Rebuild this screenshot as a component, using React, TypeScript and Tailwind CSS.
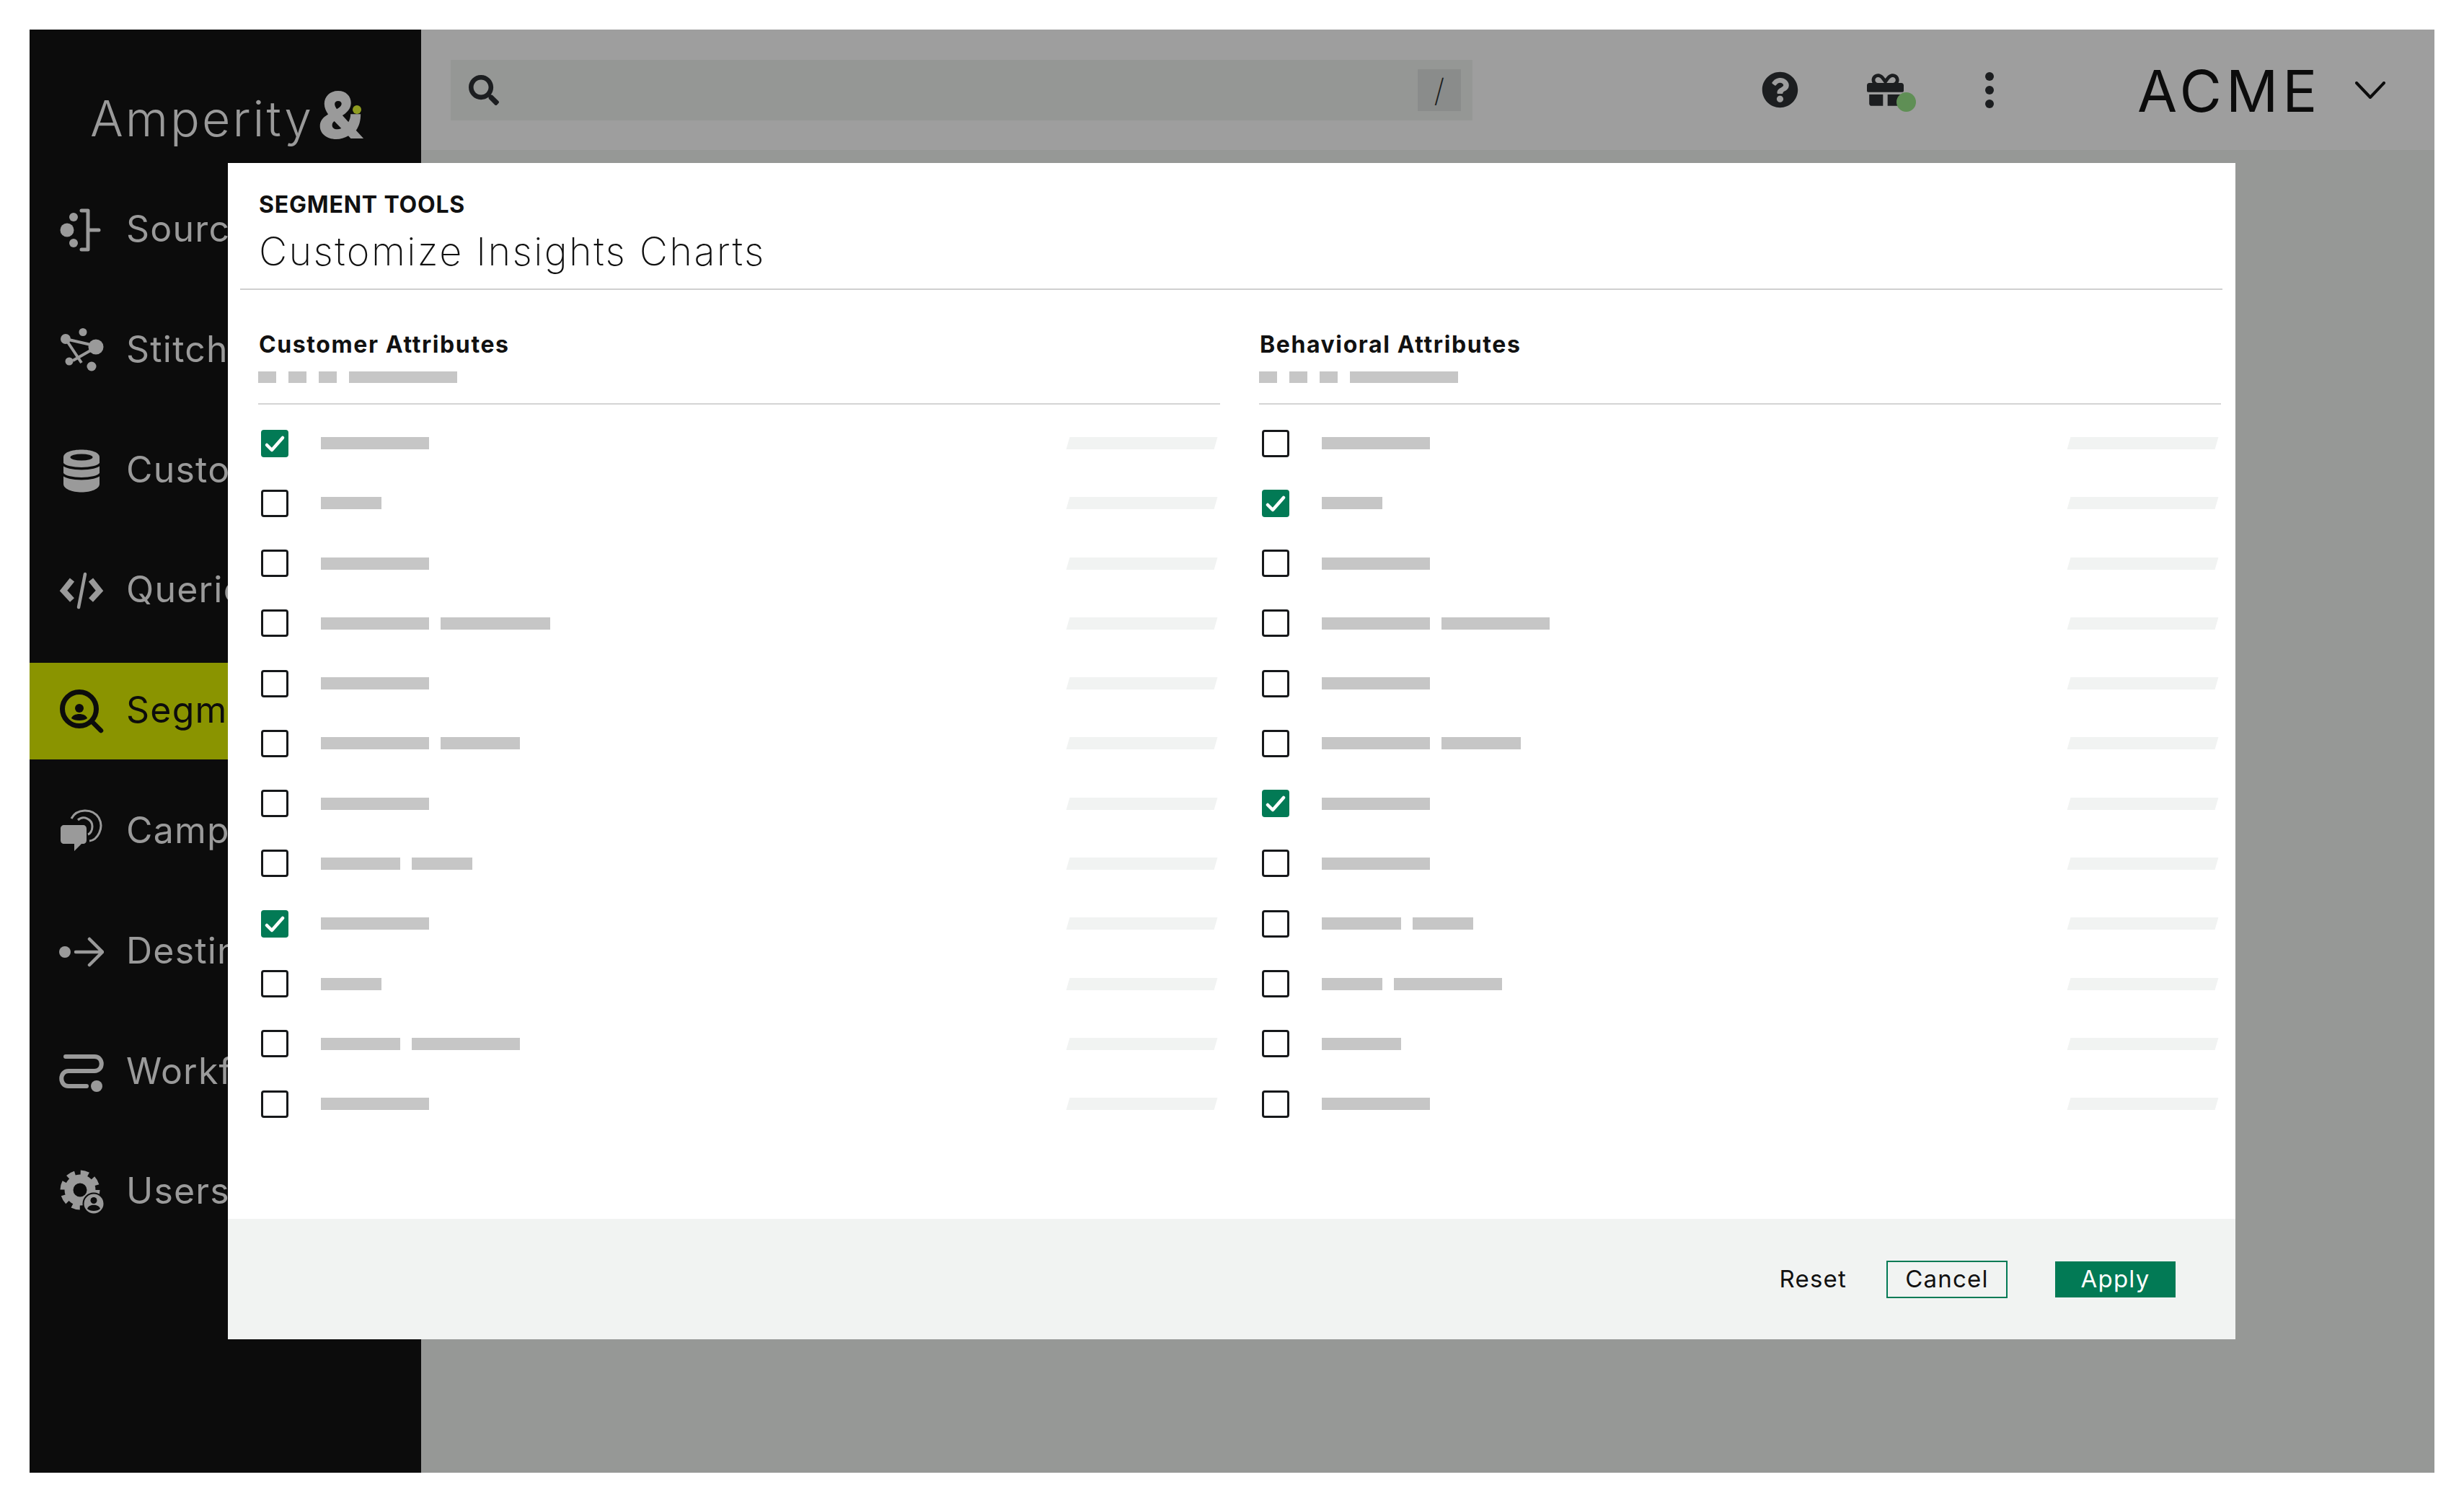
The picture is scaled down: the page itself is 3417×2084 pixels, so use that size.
import React from "react";
import { FaSearch, FaQuestionCircle, FaGift } from "react-icons/fa";

const G = "#9a9a9a";
const D = "#0c0c0c";

function SourcesIcon() {
  return (
    <svg viewBox="0 0 62 62" className="w-[62px] h-[62px]">
      <circle cx="11" cy="31" r="9.5" fill={G} />
      <circle cx="20" cy="13" r="6" fill={G} />
      <circle cx="20" cy="49" r="6" fill={G} />
      <path d="M31 4h9v54h-9M40 31h15" fill="none" stroke={G} strokeWidth="5" strokeLinecap="round" strokeLinejoin="round" />
    </svg>
  );
}
function StitchIcon() {
  return (
    <svg viewBox="0 0 62 62" className="w-[62px] h-[62px]">
      <g stroke={G} strokeWidth="4" fill="none">
        <path d="M9 15 44 23M9 15 31 48M19 45 47 29" />
      </g>
      <circle cx="51" cy="26" r="10.5" fill={G} />
      <circle cx="33" cy="5.5" r="5.5" fill={G} />
      <circle cx="9" cy="15" r="7" fill={G} />
      <circle cx="14" cy="46" r="5.5" fill={G} />
      <circle cx="45" cy="53" r="6.5" fill={G} />
    </svg>
  );
}
function CustomersIcon() {
  return (
    <svg viewBox="0 0 62 62" className="w-[62px] h-[62px]">
      <path d="M6 12C6 5 18 1.500 31 1.500S56 5 56 12V49C56 56 44 60.500 31 60.500S6 56 6 49Z" fill={G} />
      <ellipse cx="31" cy="12" rx="15.500" ry="4.500" fill={D} />
      <path d="M5 21C10 30 52 30 57 21M5 35C10 44 52 44 57 35" fill="none" stroke={D} strokeWidth="3.500" />
    </svg>
  );
}
function QueriesIcon() {
  return (
    <svg viewBox="0 0 62 62" className="w-[62px] h-[62px]">
      <path d="M18 16 6 31 18 44M44 16 56 31 44 44" fill="none" stroke={G} strokeWidth="8" />
      <path d="M36 8 27 54" fill="none" stroke={G} strokeWidth="4.500" strokeLinecap="round" />
    </svg>
  );
}
function SegmentsIcon() {
  return (
    <svg viewBox="0 0 62 62" className="w-[62px] h-[62px]">
      <circle cx="28" cy="28" r="23.500" fill="none" stroke={D} strokeWidth="7" />
      <path d="M46 46 58 58" stroke={D} strokeWidth="6.500" strokeLinecap="round" />
      <circle cx="28" cy="27" r="6" fill={D} />
      <path d="M17 41C19 33 37 33 39 41 35 45 21 45 17 41Z" fill={D} />
    </svg>
  );
}
function CampaignsIcon() {
  return (
    <svg viewBox="0 0 62 62" className="w-[62px] h-[62px]">
      <path d="M17 13C24 -1 46 -2 55 12 63 26 53 43 42 44" fill="none" stroke={G} strokeWidth="3" />
      <path d="M26 15C34 8 46 14 46 24 46 30 43 34 40 35" fill="none" stroke={G} strokeWidth="3" />
      <path d="M7 22H33C36 22 38 24 38 27V43C38 46 36 48 33 48H31L21 58V48H7C4 48 2 46 2 43V27C2 24 4 22 7 22Z" fill={G} />
    </svg>
  );
}
function DestinationsIcon() {
  return (
    <svg viewBox="0 0 62 62" className="w-[62px] h-[62px]">
      <circle cx="8" cy="31" r="8" fill={G} />
      <path d="M23 31H60M42 13 60 31 42 49" fill="none" stroke={G} strokeWidth="4.500" strokeLinecap="round" />
    </svg>
  );
}
function WorkflowsIcon() {
  return (
    <svg viewBox="0 0 62 62" className="w-[62px] h-[62px]">
      <path d="M9 9H49C62 9 62 29 49 29H13C0 29 0 50 13 50H38" fill="none" stroke={G} strokeWidth="6" strokeLinecap="round" />
      <circle cx="52" cy="50" r="8" fill={G} />
    </svg>
  );
}
function UsersIcon() {
  return (
    <svg viewBox="0 0 62 62" className="w-[62px] h-[62px]">
      <circle cx="29" cy="28" r="15.500" fill="none" stroke={G} strokeWidth="12" />
      <circle cx="29" cy="28" r="24" fill="none" stroke={G} strokeWidth="7" strokeDasharray="11 7.850" />
      <circle cx="48" cy="47" r="15.500" fill={D} />
      <circle cx="48" cy="47" r="13.500" fill={G} />
      <circle cx="48" cy="42.500" r="4.500" fill={D} />
      <path d="M39 54C41 47 55 47 57 54 53 58 43 58 39 54Z" fill={D} />
    </svg>
  );
}

const nav = [
  { label: "Sources", Icon: SourcesIcon },
  { label: "Stitch", Icon: StitchIcon },
  { label: "Customers", Icon: CustomersIcon },
  { label: "Queries", Icon: QueriesIcon },
  { label: "Segments", Icon: SegmentsIcon, active: true },
  { label: "Campaigns", Icon: CampaignsIcon },
  { label: "Destinations", Icon: DestinationsIcon },
  { label: "Workflows", Icon: WorkflowsIcon },
  { label: "Users", Icon: UsersIcon },
];

const left: [boolean, number[]][] = [
  [true, [150]], [false, [84]], [false, [150]], [false, [150, 152]],
  [false, [150]], [false, [150, 110]], [false, [150]], [false, [110, 84]],
  [true, [150]], [false, [84]], [false, [110, 150]], [false, [150]],
];
const right: [boolean, number[]][] = [
  [false, [150]], [true, [84]], [false, [150]], [false, [150, 150]],
  [false, [150]], [false, [150, 110]], [true, [150]], [false, [150]],
  [false, [110, 84]], [false, [84, 150]], [false, [110]], [false, [150]],
];

function Checkbox({ checked }: { checked: boolean }) {
  if (checked) {
    return (
      <div className="ml-[4px] w-[38px] h-[38px] rounded-[4px] bg-[#027a55] flex items-center justify-center shrink-0">
        <svg viewBox="0 0 38 38" className="w-[38px] h-[38px]">
          <path d="M8 21 15 28 30 11" fill="none" stroke="#ffffff" strokeWidth="4.500" strokeLinecap="round" strokeLinejoin="round" />
        </svg>
      </div>
    );
  }
  return <div className="ml-[4px] w-[38px] h-[38px] rounded-[4px] border-[3px] border-[#16181a] bg-white shrink-0" />;
}

function Column({ title, rows }: { title: string; rows: [boolean, number[]][] }) {
  return (
    <div className="w-[1334px] flex flex-col">
      <div className="h-[35px] pl-[1px] flex items-center text-[32px] leading-[35px] font-bold tracking-[1.6px] text-[#111111]">{title}</div>
      <div className="mt-[20px] flex gap-[17px]">
        <div className="w-[25px] h-[16px] bg-[#c6c6c6]" />
        <div className="w-[25px] h-[16px] bg-[#c6c6c6]" />
        <div className="w-[25px] h-[16px] bg-[#c6c6c6]" />
        <div className="w-[150px] h-[16px] bg-[#c6c6c6]" />
      </div>
      <div className="mt-[28px] h-[2px] bg-[#d4d4d4]" />
      <div className="mt-[12px] flex flex-col">
        {rows.map(([checked, bars], i) => (
          <div key={i} className="h-[83.270px] flex items-center">
            <Checkbox checked={checked} />
            <div className="ml-[45px] flex gap-[16px]">
              {bars.map((w, j) => (
                <div key={j} className="h-[17px] bg-[#c6c6c6]" style={{ width: w }} />
              ))}
            </div>
            <div className="ml-auto mr-[6px] w-[205px] h-[17px] bg-[#f1f3f2] -skew-x-[16deg]" />
          </div>
        ))}
      </div>
    </div>
  );
}

export default function App() {
  return (
    <div className="w-[3417px] h-[2084px] bg-white p-[41px] font-['Inter',sans-serif]">
      <div className="relative w-[3335px] h-[2001px] flex overflow-hidden bg-[#969896]">
        <aside className="w-[543px] shrink-0 bg-[#0c0c0c] flex flex-col">
          <div className="h-[211px] pl-[84px] pt-[77px] flex items-start">
            <span className="text-[68px] leading-[92px] font-light tracking-[3px] text-[#9a9a9a]">Amperity</span>
            <span className="relative ml-[6px] -mt-[13px] text-[90px] leading-[110px] font-black text-[#9a9a9a]">
              &amp;
              <span className="absolute left-[48px] top-[41px] w-[12px] h-[12px] rounded-full bg-[#8f9c20]" />
            </span>
          </div>
          <nav className="flex flex-col gap-[32.800px]">
            {nav.map(({ label, Icon, active }) => (
              <div key={label} className={`h-[134px] flex items-center pl-[41px] ${active ? "bg-[#8a9400]" : ""}`}>
                <Icon />
                <span className={`ml-[31px] -mt-[3px] text-[50px] font-normal tracking-[1.2px] ${active ? "text-[#0c0c0c]" : "text-[#9a9a9a]"}`}>{label}</span>
              </div>
            ))}
          </nav>
        </aside>

        <div className="flex-1 flex flex-col">
          <header className="h-[167px] bg-[#9e9e9e] flex items-center pl-[41px]">
            <div className="w-[1417px] h-[84px] bg-[#959795] flex items-center pl-[25px] pr-[16px]">
              <FaSearch className="w-[42px] h-[42px] text-[#1c1e20]" />
              <div className="ml-auto w-[60px] h-[58px] bg-[#8a8c8b] flex items-center justify-center text-[44px] font-extralight text-[#1c1e20]">/</div>
            </div>
            <FaQuestionCircle className="ml-[401px] w-[51px] h-[51px] text-[#1c1e20]" />
            <div className="relative ml-[95px] w-[51px] h-[51px] flex items-center">
              <FaGift className="w-[51px] h-[51px] text-[#1c1e20]" />
              <span className="absolute left-[41px] top-[29px] w-[27px] h-[27px] rounded-full bg-[#5f8f55]" />
            </div>
            <div className="ml-[113px] flex flex-col gap-[7px]">
              <span className="w-[12px] h-[12px] rounded-full bg-[#1c1e20]" />
              <span className="w-[12px] h-[12px] rounded-full bg-[#1c1e20]" />
              <span className="w-[12px] h-[12px] rounded-full bg-[#1c1e20]" />
            </div>
            <span className="ml-[199px] w-[252px] mt-[3px] text-[80px] leading-[90px] font-normal tracking-[6px] text-[#0c0c0c]">ACME</span>
            <svg viewBox="0 0 42 24" className="ml-[50px] w-[42px] h-[24px]">
              <path d="M2 2 21 22 40 2" fill="none" stroke="#0c0c0c" strokeWidth="4" strokeLinecap="round" strokeLinejoin="round" />
            </svg>
          </header>
        </div>

        <div className="absolute left-[275px] top-[185px] w-[2784px] h-[1631px] bg-white flex flex-col text-[#111111]">
          <div className="mx-[17px] mr-[18px] h-[176px] border-b-2 border-[#cfcfcf] pl-[26px] pt-[40px]">
            <div className="text-[32px] leading-[36px] font-bold tracking-[0.8px]">SEGMENT TOOLS</div>
            <div className="mt-[16px] text-[54px] leading-[62px] font-extralight tracking-[2.4px]">Customize Insights Charts</div>
          </div>
          <div className="flex-1 pl-[42px] pt-[58px] flex gap-[54px]">
            <Column title="Customer Attributes" rows={left} />
            <Column title="Behavioral Attributes" rows={right} />
          </div>
          <div className="h-[167px] bg-[#f1f3f2] flex items-center justify-end pr-[83px]">
            <span className="text-[33px] font-normal tracking-[1.2px]">Reset</span>
            <div className="ml-[55px] w-[168px] h-[52px] border-2 border-[#027a55] flex items-center justify-center text-[33px] font-normal tracking-[1.2px]">Cancel</div>
            <div className="ml-[66px] w-[167px] h-[50px] bg-[#027a55] flex items-center justify-center text-[33px] font-normal tracking-[1.2px] text-white">Apply</div>
          </div>
        </div>
      </div>
    </div>
  );
}
